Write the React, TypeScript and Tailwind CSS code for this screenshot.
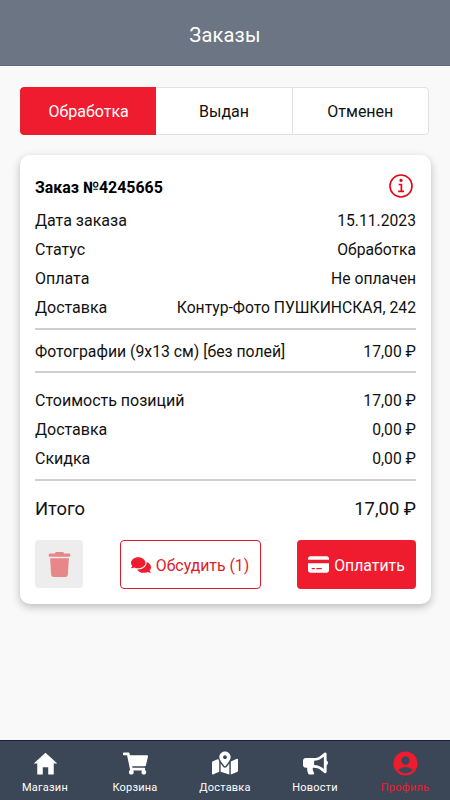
import type { ReactNode } from "react";
import {
  FaBullhorn,
  FaComments,
  FaMapMarkedAlt,
  FaShoppingCart,
} from "react-icons/fa";
import { FaCreditCard, FaTrash } from "react-icons/fa6";
import { IoMdHome } from "react-icons/io";
import { MdAccountCircle } from "react-icons/md";

const tabs = ["Обработка", "Выдан", "Отменен"];

const details = [
  { label: "Дата заказа", value: "15.11.2023" },
  { label: "Статус", value: "Обработка" },
  { label: "Оплата", value: "Не оплачен" },
  { label: "Доставка", value: "Контур-Фото ПУШКИНСКАЯ, 242" },
];

const costs = [
  { label: "Стоимость позиций", value: "17,00 ₽" },
  { label: "Доставка", value: "0,00 ₽" },
  { label: "Скидка", value: "0,00 ₽" },
];

const navItems = [
  { label: "Магазин", icon: <IoMdHome size={29} /> },
  { label: "Корзина", icon: <FaShoppingCart size={25} /> },
  { label: "Доставка", icon: <FaMapMarkedAlt size={26} /> },
  { label: "Новости", icon: <FaBullhorn size={25} /> },
  { label: "Профиль", icon: <MdAccountCircle size={29} />, active: true },
];

const Row = ({ label, value }: { label: string; value: ReactNode }) => (
  <div className="flex h-[29px] items-center justify-between whitespace-nowrap">
    <span>{label}</span>
    <span className="text-[15.7px]">{value}</span>
  </div>
);

const InfoIcon = () => (
  <svg width="24" height="24" viewBox="0 0 24 24" fill="none" stroke="#e30613">
    <circle cx="12" cy="12" r="11" strokeWidth="1.6" />
    <circle cx="12" cy="6.4" r="1.6" fill="#e30613" stroke="none" />
    <path d="M9.6 10.5h2.8v6.8M9.2 17.4h5.8" strokeWidth="1.7" />
  </svg>
);

const App = () => {
  return (
    <div className="flex h-[800px] w-[450px] flex-col overflow-hidden bg-[#f9f9f9] font-['Roboto',sans-serif] text-base text-[#111]">
      <header className="flex h-[66px] shrink-0 items-center justify-center border-b border-[#606a7b] bg-[#6c7584] pt-1 text-xl tracking-[0.2px] text-white">
        Заказы
      </header>

      <main className="flex-1 pt-[21px] pr-[19px] pl-5">
        <div className="mr-0.5 grid h-12 grid-cols-3 overflow-hidden rounded">
          {tabs.map((tab, i) => (
            <button
              key={tab}
              className={
                i === 0
                  ? "rounded-l border border-r-0 border-[#e5202f] bg-[#ee1c2e] pt-0.5 text-white"
                  : "border border-l-0 border-[#e2e2e2] bg-white pt-0.5 last:rounded-r"
              }
            >
              {tab}
            </button>
          ))}
        </div>

        <section className="mt-5 h-[449px] rounded-[10px] bg-white px-[15px] shadow-[0_3px_8px_rgba(0,0,0,0.25)]">
          <div className="flex h-[51px] items-center justify-between pt-2.5 pr-[3px] text-[15.9px] font-bold text-black">
            <h2 className="pt-1">Заказ №4245665</h2>
            <InfoIcon />
          </div>
          <div>
            {details.map((row) => (
              <Row key={row.label} {...row} />
            ))}
          </div>
          <div className="mt-[6px] flex h-[45px] items-center justify-between border-y-2 border-[#cfcfcf] pt-0.5 text-[15.8px]">
            <span>Фотографии (9x13 см) [без полей]</span>
            <span className="text-[15.7px]">17,00 ₽</span>
          </div>
          <div className="mt-[13px] h-[95px] border-b-2 border-[#cfcfcf]">
            {costs.map((row) => (
              <Row key={row.label} {...row} />
            ))}
          </div>
          <div className="flex h-[54px] items-center justify-between pt-0.5 text-[18.4px]">
            <span>Итого</span>
            <span>17,00 ₽</span>
          </div>
          <div className="mt-[5px] flex items-start justify-between">
            <button className="flex size-12 items-center justify-center rounded bg-[#ededed] text-[#e88689]">
              <FaTrash size={25} />
            </button>
            <button className="flex h-[49px] w-[141px] items-center justify-center gap-[5px] rounded border border-[#dc1c2a] text-[15.8px] text-[#dc1c2a]">
              <FaComments size={20} className="text-[#ee1c2e]" />
              <span className="pt-0.5">Обсудить (1)</span>
            </button>
            <button className="flex h-[49px] w-[119px] items-center justify-center gap-[5px] rounded bg-[#ee1c2e] text-[15.8px] text-white">
              <FaCreditCard size={21} />
              <span className="pt-0.5">Оплатить</span>
            </button>
          </div>
        </section>
      </main>

      <nav className="grid h-[60px] shrink-0 grid-cols-5 border-t border-[#142044] bg-[#3b4756] text-[11px] tracking-[0.2px] text-white">
        {navItems.map(({ label, icon, active }) => (
          <a
            key={label}
            className={
              active
                ? "flex flex-col items-center text-[#ee1c2e]"
                : "flex flex-col items-center"
            }
          >
            <span className="mt-[7px] mb-0.5 flex h-[30px] items-center">
              {icon}
            </span>
            <span>{label}</span>
          </a>
        ))}
      </nav>
    </div>
  );
};

export default App;
